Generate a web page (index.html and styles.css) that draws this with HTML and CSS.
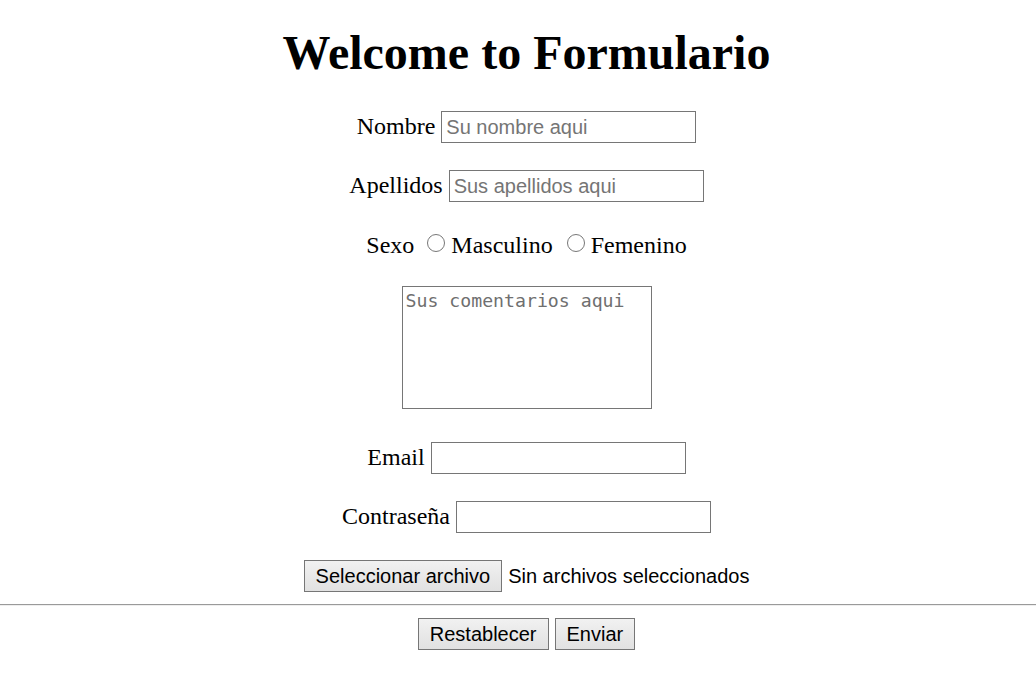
FILE: index.html
```html
<!DOCTYPE html>
<html lang="es">
<head>
<meta charset="utf-8">
<title>Formulario</title>
<link rel="stylesheet" href="styles.css">
</head>
<body>
  <main class="content">
    <h1 class="title">Welcome to Formulario</h1>
    <form class="form" id="formulario">
      <div class="row">
        <label class="label" for="nombre">Nombre</label>
        <input class="field" type="text" id="nombre" placeholder="Su nombre aqui">
      </div>
      <div class="row">
        <label class="label" for="apellidos">Apellidos</label>
        <input class="field" type="text" id="apellidos" placeholder="Sus apellidos aqui">
      </div>
      <div class="row row-radio">
        <span class="label">Sexo</span>
        <input class="radio" type="radio" name="sexo" id="masculino">
        <label class="label" for="masculino">Masculino</label>
        <input class="radio" type="radio" name="sexo" id="femenino">
        <label class="label" for="femenino">Femenino</label>
      </div>
      <div class="row row-textarea">
        <textarea class="comments" placeholder="Sus comentarios aqui"></textarea>
      </div>
      <div class="row">
        <label class="label" for="email">Email</label>
        <input class="field" type="email" id="email">
      </div>
      <div class="row">
        <label class="label" for="pass">Contraseña</label>
        <input class="field" type="password" id="pass">
      </div>
      <div class="row row-file">
        <button class="btn" type="button">Seleccionar archivo</button>
        <span class="file-status">Sin archivos seleccionados</span>
      </div>
    </form>
  </main>
  <div class="divider"></div>
  <div class="content actions">
    <button class="btn" type="reset" form="formulario">Restablecer</button>
    <button class="btn" type="submit" form="formulario">Enviar</button>
  </div>
</body>
</html>
```

FILE: styles.css
```css
html, body {
  margin: 0;
  padding: 0;
  background: #ffffff;
}

body {
  font-family: "Liberation Serif", "Times New Roman", serif;
  font-size: 24px;
  color: #000000;
}

.content {
  padding-left: 17px;
}

.title {
  margin: 25px 0 31px;
  font-size: 48px;
  line-height: 55px;
  font-weight: bold;
  text-align: center;
}

.form {
  display: flex;
  flex-direction: column;
  align-items: center;
  gap: 27px;
  margin: 0;
}

.row {
  display: flex;
  align-items: baseline;
  justify-content: center;
  gap: 6px;
}

.row-radio {
  height: 32px;
  align-items: center;
  gap: 0;
}

.row-radio .label:first-child {
  margin-right: 13px;
}

.radio {
  appearance: none;
  -webkit-appearance: none;
  width: 18px;
  height: 18px;
  margin: 0 6px 4px 0;
  border: 1.5px solid #777777;
  border-radius: 50%;
  background: #ffffff;
  box-sizing: border-box;
}

.radio + .label + .radio {
  margin-left: 14px;
}

.label {
  line-height: normal;
}

.field {
  box-sizing: border-box;
  width: 255px;
  height: 32px;
  margin: 0;
  padding: 0 4px;
  border: 1px solid #767676;
  border-radius: 0;
  font-family: "Liberation Sans", Arial, sans-serif;
  font-size: 20px;
  color: #000000;
  background: #ffffff;
}

.field::placeholder {
  color: #757575;
}

.row-textarea {
  margin: -2px 0 6px;
}

.comments {
  box-sizing: border-box;
  width: 250px;
  height: 123px;
  margin: 0;
  padding: 3px 3px;
  border: 1px solid #767676;
  border-radius: 0;
  resize: none;
  font-family: "DejaVu Sans Mono", "Liberation Mono", monospace;
  font-size: 18.2px;
  line-height: 21px;
}

.comments::placeholder {
  color: #6f6f6f;
}

.row-file {
  align-items: center;
}

.btn {
  box-sizing: border-box;
  height: 32px;
  margin: 0;
  padding: 0 11px;
  border: 1px solid #767676;
  border-radius: 0;
  background: linear-gradient(#f1f1f1, #e1e1e1);
  font-family: "Liberation Sans", Arial, sans-serif;
  font-size: 20px;
  color: #000000;
}

.file-status {
  font-family: "Liberation Sans", Arial, sans-serif;
  font-size: 20px;
}

.divider {
  margin-top: 12px;
  border-top: 1px solid #9a9a9a;
  border-bottom: 1px solid #eeeeee;
}

.actions {
  display: flex;
  justify-content: center;
  gap: 6px;
  margin-top: 12px;
}
```
